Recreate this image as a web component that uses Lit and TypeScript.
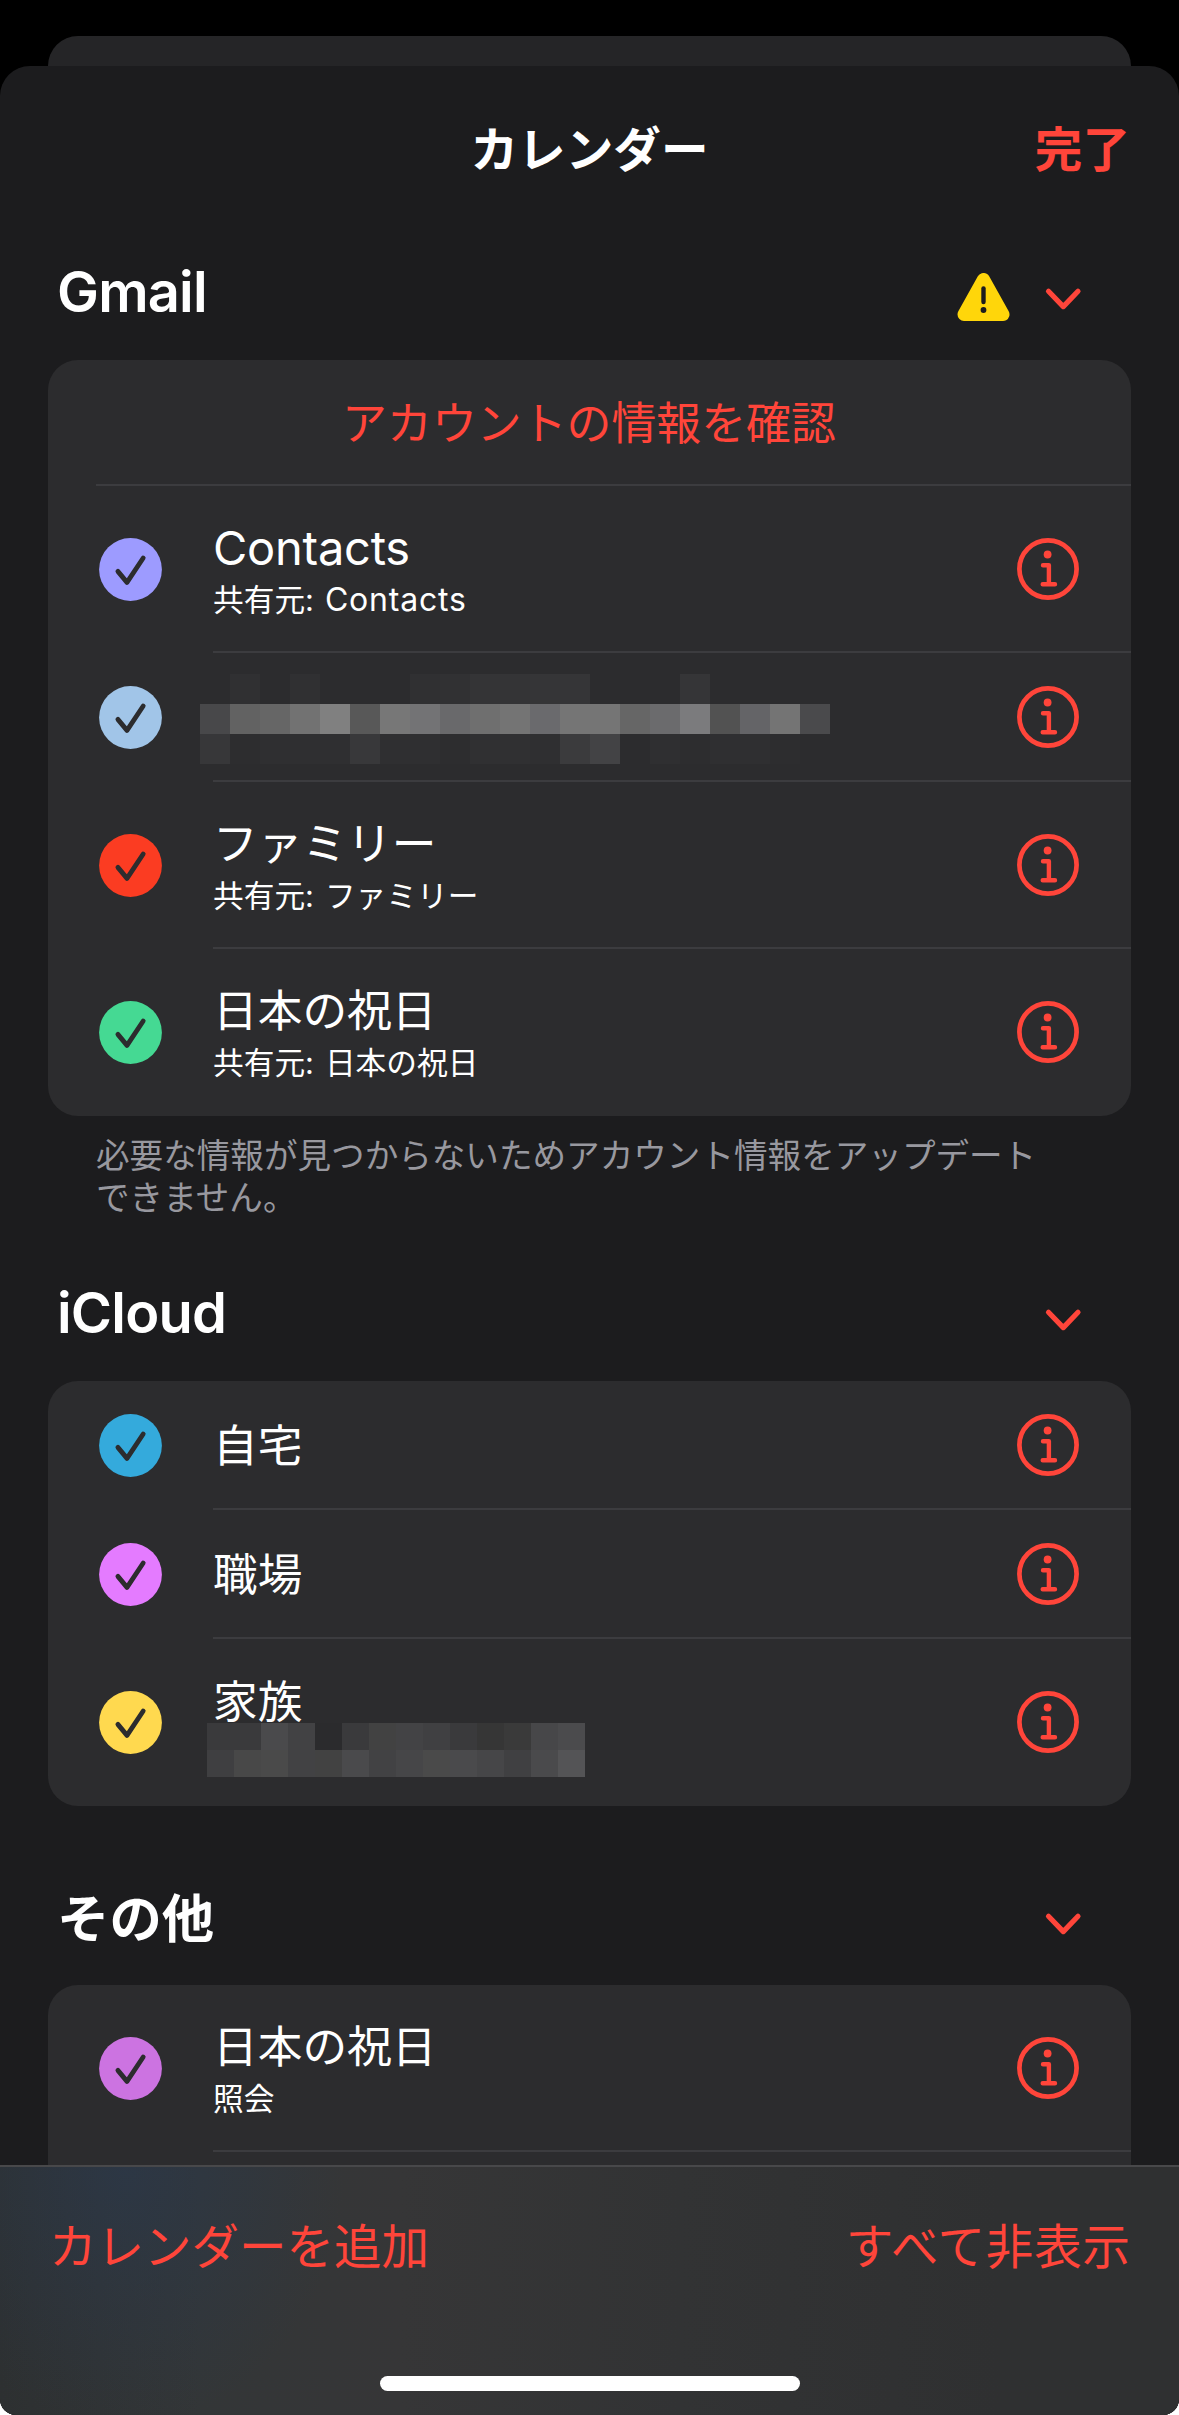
import { LitElement, html, svg, css, nothing } from "lit";
import { customElement, property } from "lit/decorators.js";
import { styleMap } from "lit/directives/style-map.js";

interface CalendarItem {
  color: string;
  title?: string;
  latin?: boolean;
  subtitle?: string;
  subtitleLatin?: string;
  mosaic?: "title" | "subtitle";
}

interface Account {
  name: string;
  latin: boolean;
  warning?: boolean;
  action?: string;
  note?: string;
  items: CalendarItem[];
}

const TITLE_MOSAIC = [
  "2c2c2e 303032 2c2c2e 303032 2c2c2e 2c2c2e 2c2c2e 303032 313133 343436 343436 353537 353537 2c2c2e 2c2c2e 2c2c2e 353537 2c2c2e 2c2c2e 2c2c2e 2c2c2e",
  "48484a 626262 666666 727272 808080 585858 777777 737375 69696b 6f6f6f 747474 6a6a6d 757575 757575 666666 6b6b6d 7b7b7d 525252 646467 747474 4a4a4c",
  "373739 2d2d2f 2f2f31 2f2f31 2f2f31 38383a 2f2f31 2f2f31 2d2d2f 303032 303032 2f2f31 3b3b3d 434345 2c2c2e 2f2f31 2d2d2f 2f2f31 2f2f31 2d2d2f 2c2c2e",
];

const SUBTITLE_MOSAIC = [
  "3a3a3c 3a3a3c 4a4a4c 424244 2b2b2d 3a3a3c 424242 434345 404042 3a3a3c 363636 3a3a3a 474749 4b4b4d",
  "3f3f41 484848 4a4a4a 424244 424242 4a4a4c 424244 464648 4a4a4a 4a4a4c 464648 404042 4a4a4c 545456",
];

const ACCOUNTS: Account[] = [
  {
    name: "Gmail",
    latin: true,
    warning: true,
    action: "アカウントの情報を確認",
    note: "必要な情報が見つからないためアカウント情報をアップデートできません。",
    items: [
      { color: "#9d9bff", title: "Contacts", latin: true, subtitle: "共有元: ", subtitleLatin: "Contacts" },
      { color: "#a1c5e8", mosaic: "title" },
      { color: "#fb3c22", title: "ファミリー", subtitle: "共有元: ファミリー" },
      { color: "#45d993", title: "日本の祝日", subtitle: "共有元: 日本の祝日" },
    ],
  },
  {
    name: "iCloud",
    latin: true,
    items: [
      { color: "#34aadc", title: "自宅" },
      { color: "#e47bff", title: "職場" },
      { color: "#ffd94f", title: "家族", mosaic: "subtitle" },
    ],
  },
  {
    name: "その他",
    latin: false,
    items: [{ color: "#cc73e1", title: "日本の祝日", subtitle: "照会" }],
  },
];

const checkIcon = svg`<path d="M18.9 33.4 L28 44.4 L44.2 20" fill="none" stroke="#2c2c2e" stroke-width="4.8" stroke-linecap="round" stroke-linejoin="round"/>`;

@customElement("pixel-mosaic")
class PixelMosaic extends LitElement {
  static styles = css`
    :host { display: block; }
    .line { display: flex; }
    .cell { flex: none; }
  `;
  @property({ attribute: false }) lines: string[] = [];
  @property({ type: Number }) size = 30;

  render() {
    const s = `${this.size}px`;
    return this.lines.map(
      (line) => html`<div class="line">
        ${line.split(" ").map(
          (c) => html`<div class="cell" style=${styleMap({ width: s, height: s, background: `#${c}` })}></div>`
        )}
      </div>`
    );
  }
}

@customElement("calendar-row")
class CalendarRow extends LitElement {
  static styles = css`
    :host { display: block; }
    .row { display: flex; height: 167px; padding-left: 51px; }
    .row.single { height: 129px; }
    .check { flex: none; width: 63px; height: 63px; align-self: center; }
    .body {
      flex: 1; display: flex; align-items: center; margin-left: 51px; padding-right: 52px;
      box-sizing: border-box; border-bottom: 2px solid #3c3c3f; min-width: 0;
    }
    .row.last .body { border-bottom-color: transparent; }
    .text { flex: 1; min-width: 0; color: #fff; white-space: nowrap; }
    .title { font-size: 44.7px; line-height: 56px; }
    .single .title { margin-top: 3px; }
    .title.latin { font-size: 47px; letter-spacing: -0.25px; }
    .sub { font-size: 30.7px; line-height: 40px; margin-top: 4px; margin-bottom: -2px; white-space: pre; word-spacing: 2.4px; }
    .sub .latin { font-size: 32px; letter-spacing: 0.8px; }
    .info { flex: none; width: 62px; height: 62px; margin-top: 1px; }
    .wide { margin-left: -13px; margin-top: 4px; }
    .narrow { height: 46px; margin: -7px 0 0 -6px; }
  `;
  @property({ attribute: false }) item!: CalendarItem;
  @property({ type: Boolean }) last = false;

  render() {
    const { color, title, latin, subtitle, subtitleLatin, mosaic } = this.item;
    const single = !subtitle && mosaic !== "subtitle";
    return html`<div class="row ${single ? "single" : ""} ${this.last ? "last" : ""}">
      <svg class="check" viewBox="0 0 63 63"><circle cx="31.5" cy="31.5" r="31.4" fill=${color} />${checkIcon}</svg>
      <div class="body">
        <div class="text">
          ${mosaic === "title"
            ? html`<pixel-mosaic class="wide" .lines=${TITLE_MOSAIC} .size=${30}></pixel-mosaic>`
            : html`<div class="title ${latin ? "latin" : ""}">${title}</div>`}
          ${subtitle
            ? html`<div class="sub">${subtitle}${subtitleLatin ? html`<span class="latin">${subtitleLatin}</span>` : nothing}</div>`
            : nothing}
          ${mosaic === "subtitle"
            ? html`<div class="narrow"><pixel-mosaic .lines=${SUBTITLE_MOSAIC} .size=${27}></pixel-mosaic></div>`
            : nothing}
        </div>
        <svg class="info" viewBox="-31 -31 62 62" fill="none" stroke="#ff453a" stroke-width="4.4" stroke-linecap="round" stroke-linejoin="round">
          <circle r="28.6" stroke-width="4.7" />
          <circle cx="-0.4" cy="-14.5" r="3.9" fill="#ff453a" stroke="none" />
          <path d="M-5 -3.8 H0.9 V15 M-5.3 15.2 H7" />
        </svg>
      </div>
    </div>`;
  }
}

@customElement("account-section")
class AccountSection extends LitElement {
  static styles = css`
    :host { display: block; }
    .head { display: flex; align-items: center; height: 120px; padding: 0 48px 0 10px; }
    .name { flex: 1; font-size: 52.4px; font-weight: 700; line-height: 64px; color: #fff; margin: -13px 0 0 -1px; }
    .name.latin { font-size: 56px; font-weight: 600; letter-spacing: -0.8px; margin-top: -17px; }
    .warn { width: 53px; height: 48px; margin: -6px 33px 0 0; }
    .chev { width: 40px; height: 24px; margin-top: -2px; }
    .card { background: #2c2c2e; border-radius: 30px; overflow: hidden; }
    .action {
      margin-left: 48px; height: 126px; box-sizing: border-box; border-bottom: 2px solid #3c3c3f;
      padding: 0 49px 3px 0; display: flex; align-items: center; justify-content: center;
      color: #ff453a; font-size: 44.9px;
    }
    .note { margin: 19px 90px 0 48px; font-size: 33.6px; line-height: 42px; color: #98989f; }
  `;
  @property({ attribute: false }) account!: Account;

  render() {
    const a = this.account;
    return html`
      <div class="head">
        <div class="name ${a.latin ? "latin" : ""}">${a.name}</div>
        ${a.warning
          ? html`<svg class="warn" viewBox="0 0 53 48">
              <path d="M26.5 6.5 L46 41.5 H7 Z" fill="#ffd60a" stroke="#ffd60a" stroke-width="13" stroke-linejoin="round" />
              <path d="M26.5 15.5 V29" stroke="#1c1c1e" stroke-width="4.4" stroke-linecap="round" />
              <circle cx="26.5" cy="37" r="2.9" fill="#1c1c1e" />
            </svg>`
          : nothing}
        <svg class="chev" viewBox="0 0 40 24">
          <path d="M5.5 4.3 L20.3 19.6 L35 4.3" fill="none" stroke="#ff453a" stroke-width="5.2" stroke-linecap="round" stroke-linejoin="round" />
        </svg>
      </div>
      <div class="card">
        ${a.action ? html`<div class="action">${a.action}</div>` : nothing}
        ${a.items.map((item, i) => html`<calendar-row .item=${item} ?last=${i === a.items.length - 1 && a.name !== "その他"}></calendar-row>`)}
        <slot></slot>
      </div>
      ${a.note ? html`<div class="note">${a.note}</div>` : nothing}
    `;
  }
}

@customElement("app-root")
class AppRoot extends LitElement {
  static styles = css`
    :host { display: block; font-family: Inter, "Noto Sans CJK JP", sans-serif; background: #fff; }
    .screen {
      height: 2415px; background: #000; overflow: hidden; display: flex; flex-direction: column;
      border-radius: 0 0 16px 16px; font-family: Inter, "Noto Sans CJK JP", sans-serif;
    }
    .behind { flex: none; height: 30px; margin: 36px 48px 0; background: #252527; border-radius: 30px 30px 0 0; }
    .sheet {
      flex: 1; min-height: 0; background: #1c1c1e; border-radius: 30px 30px 0 0;
      display: flex; flex-direction: column; overflow: hidden;
    }
    .nav {
      flex: none; height: 166px; display: grid; grid-template-columns: 1fr auto 1fr; align-items: center;
      padding: 2px 49px 0; box-sizing: border-box; font-size: 47.6px; font-weight: 700; color: #fff; line-height: 60px;
    }
    .nav .title { grid-column: 2; }
    .nav .done { justify-self: end; color: #ff453a; }
    .list { flex: 1; min-height: 0; overflow: hidden; padding: 8px 48px 0; display: flex; flex-direction: column; }
    account-section { flex: none; }
    .s1 { height: 1021px; }
    .s2 { height: 604px; }
    .filler { height: 60px; }
    .toolbar {
      flex: none; height: 250px; box-sizing: border-box; border-top: 2px solid #48484a;
      background:
        radial-gradient(ellipse 220px 260px at 125px 0, rgba(43, 56, 74, 0.75), rgba(43, 56, 74, 0) 100%),
        linear-gradient(90deg, #2d3031 0, #333637 200px, #363637 400px, #323334 680px, #2f3031 1000px, #2f3031 100%);
      display: flex; flex-direction: column; align-items: center;
    }
    .actions {
      align-self: stretch; display: flex; justify-content: space-between; padding: 50px 49px 0;
      color: #ff453a; font-size: 47.5px; line-height: 60px;
    }
    .hide { letter-spacing: 0.9px; margin-right: -1px; }
    .home { width: 420px; height: 15px; border-radius: 8px; background: #fff; margin-top: auto; margin-bottom: 24px; }
  `;

  render() {
    return html`<div class="screen">
      <div class="behind"></div>
      <div class="sheet">
        <div class="nav"><div class="title">カレンダー</div><div class="done">完了</div></div>
        <div class="list">
          ${ACCOUNTS.map(
            (a, i) => html`<account-section class="s${i + 1}" .account=${a}>${i === 2 ? html`<div class="filler"></div>` : nothing}</account-section>`
          )}
        </div>
        <div class="toolbar">
          <div class="actions"><span>カレンダーを追加</span><span class="hide">すべて非表示</span></div>
          <div class="home"></div>
        </div>
      </div>
    </div>`;
  }
}
